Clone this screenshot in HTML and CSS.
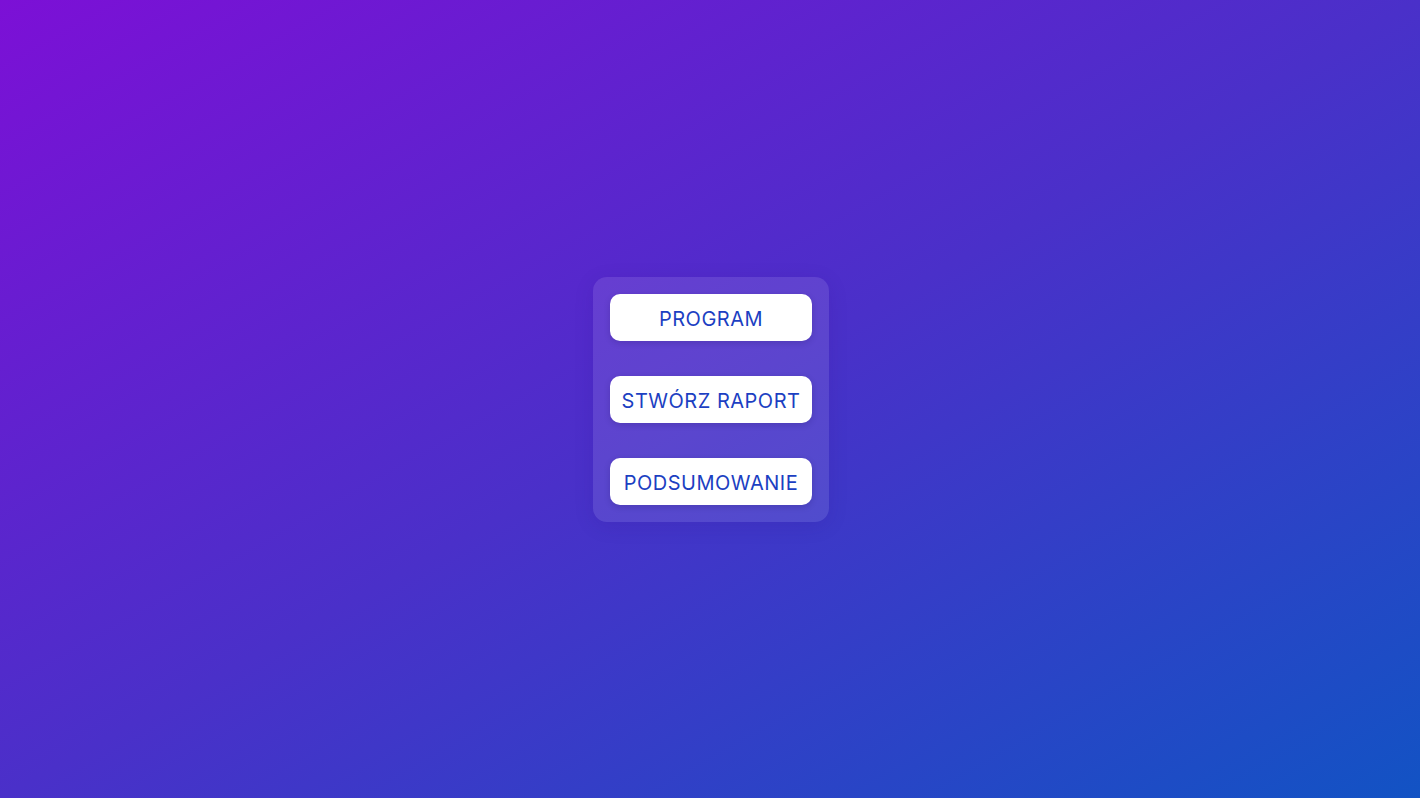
FILE: index.html
```html
<!DOCTYPE html>
<html lang="pl">
<head>
<meta charset="utf-8">
<title>Menu</title>
<link rel="stylesheet" href="styles.css">
</head>
<body>
<main class="page">
  <nav class="menu">
    <button class="menu-btn">PROGRAM</button>
    <button class="menu-btn">STWÓRZ RAPORT</button>
    <button class="menu-btn">PODSUMOWANIE</button>
  </nav>
</main>
</body>
</html>
```
FILE: styles.css
```css
html, body {
  margin: 0;
  padding: 0;
  height: 100%;
}
body {
  font-family: "Inter", "Open Sans", "Liberation Sans", sans-serif;
  background: linear-gradient(to bottom right, #7c10d6 0%, #4a30c9 50%, #1253c4 100%);
  background-attachment: fixed;
}
.page {
  height: 798px;
  display: flex;
  align-items: center;
  justify-content: center;
}
.menu {
  display: flex;
  flex-direction: column;
  gap: 35px;
  padding: 17px;
  border-radius: 14px;
  background: rgba(255, 255, 255, 0.1);
  box-shadow: 0 4px 20px rgba(40, 10, 120, 0.12);
  margin-top: 1px;
  margin-left: 2px;
}
.menu-btn {
  width: 202px;
  height: 47px;
  border: none;
  border-radius: 10px;
  background: #ffffff;
  color: #1c3fc2;
  font-family: inherit;
  font-size: 20px;
  font-weight: 400;
  letter-spacing: 0.5px;
  padding: 2px 0 0;
  box-shadow: 0 2px 6px rgba(20, 10, 80, 0.18);
  cursor: pointer;
}
```
